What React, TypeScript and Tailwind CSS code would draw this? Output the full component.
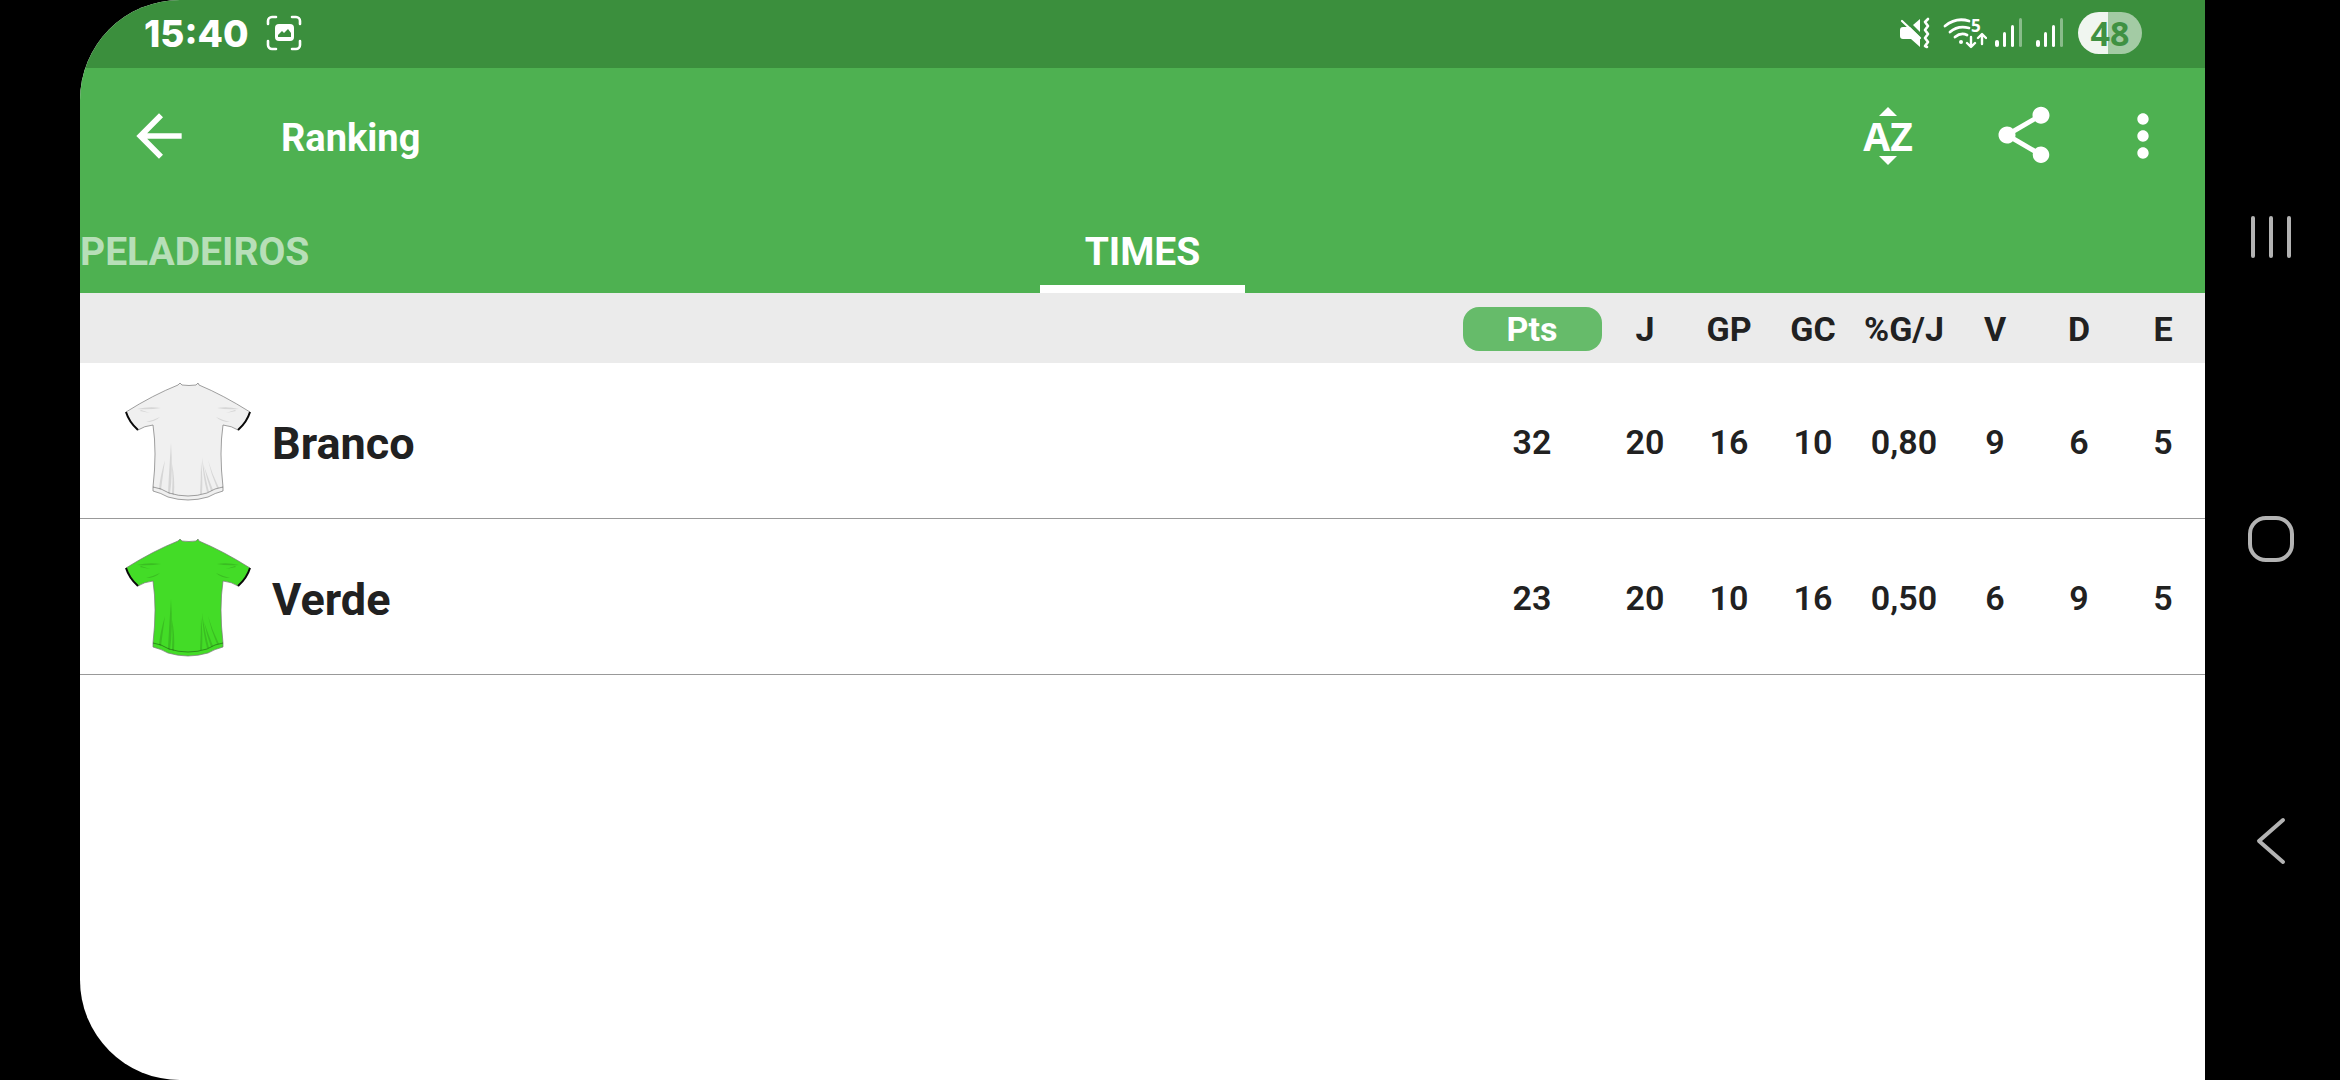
import React from "react";
import { MdArrowBack, MdMoreVert, MdShare } from "react-icons/md";

type Team = { name: string; color: string; shade: string; values: string[] };

const columns = ["Pts", "J", "GP", "GC", "%G/J", "V", "D", "E"];

const teams: Team[] = [
  { name: "Branco", color: "#f0f0f0", shade: "#d6d6d6", values: ["32", "20", "16", "10", "0,80", "9", "6", "5"] },
  { name: "Verde", color: "#43dc27", shade: "#3abd22", values: ["23", "20", "10", "16", "0,50", "6", "9", "5"] },
];

function Shirt({ color, shade }: { color: string; shade: string }) {
  return (
    <svg width="130" height="120" viewBox="0 0 130 120" aria-hidden="true">
      <path
        d="M57 1 L55 3 Q30 13 3 30 Q6 40 15 48 Q21 44 30 43 Q34 70 30 105 L30 109 Q38 111 45 115 Q65 121 85 115 Q92 111 100 109 L100 105 Q96 70 100 43 Q109 44 115 48 Q124 40 127 30 Q100 13 76 3 L75 1 L73 3 Q66 4 59 3 Z"
        fill={color}
        stroke="#777"
        strokeWidth="0.7"
      />
      <g fill={shade}>
        <path d="M14 27 Q26 24 38 26 Q26 28 14 27Z M18 28 L27 31 L17 29Z M23 40 Q31 38 37 35 Q32 40 23 40Z" />
        <path d="M116 27 Q104 24 94 26 Q104 28 116 27Z M112 28 L103 31 L113 29Z M107 40 Q99 38 93 35 Q98 40 107 40Z" />
        <path d="M48 61 Q46 90 45 111 L47 112 Q50 90 48 61Z M49 82 Q50 98 49 112 L51 113 Q52 96 49 82Z M42 78 Q37 95 36 107 L38 108 Q40 92 42 78Z" />
        <path d="M78 80 Q78 95 77 112 L79 112 Q80 95 78 80Z M79 75 Q82 95 86 110 L84 110 Q80 95 79 75Z M81 84 Q86 98 90 108 L88 109 Q84 98 81 84Z M85 78 Q89 92 96 106 L94 106 Q88 92 85 78Z" />
      </g>
      <path d="M30 105 Q38 106 46 111 Q65 117 84 111 Q92 106 100 105" fill="none" stroke="#000" strokeOpacity="0.35" />
      <path d="M3 30 Q6 40 15 48 M127 30 Q124 40 115 48" fill="none" stroke="#0a0a0a" strokeWidth="2" />
    </svg>
  );
}

function CaptureIcon() {
  return (
    <svg width="36" height="36" viewBox="0 0 36 36" fill="none" aria-hidden="true">
      <path
        d="M2 9V6a4 4 0 0 1 4-4h4M26 2h4a4 4 0 0 1 4 4v3M34 26v4a4 4 0 0 1-4 4h-4M10 34H6a4 4 0 0 1-4-4v-4"
        stroke="#fff"
        strokeWidth="2.6"
        strokeLinecap="round"
      />
      <rect x="9" y="9" width="19" height="17" rx="4" fill="#fff" />
      <path d="M12 22v-2l4-4 2 2 4-4 3 4v4z" fill="#3b8f3d" />
    </svg>
  );
}

function MuteIcon() {
  return (
    <svg width="32" height="32" viewBox="0 0 32 32" fill="none" aria-hidden="true">
      <path d="M1 13a3 3 0 0 1 3-3h4l3 0L21 20v10l-9-8H4a3 3 0 0 1-3-3z" fill="#fff" />
      <path d="M14 8l7-6v13z" fill="#fff" />
      <path d="M3 4l18 17" stroke="#fff" strokeWidth="2.2" strokeLinecap="round" />
      <path d="M29 2l-3 3 3 4-3 4 3 4-3 4 3 4-3 4 2 1" stroke="#fff" strokeWidth="2.6" strokeLinecap="round" strokeLinejoin="round" />
    </svg>
  );
}

function WifiIcon() {
  return (
    <svg width="44" height="44" viewBox="0 -6 44 44" fill="none" stroke="#fff" strokeLinecap="round" strokeLinejoin="round" aria-hidden="true">
      <path d="M2 9Q13 0 26 4M7 15Q15 8 26 11M12 20Q18 15 24 18" strokeWidth="2.8" />
      <circle cx="18" cy="25" r="2" fill="#fff" stroke="none" />
      <path d="M28 20v9M24 26l4 4 4-4M39 27v-9M35 21l4-4 4 4" strokeWidth="2.4" />
      <text x="28" y="15" fontFamily="Open Sans" fontWeight="700" fontSize="17" fill="#fff" stroke="none">5</text>
    </svg>
  );
}

function SignalIcon() {
  return (
    <svg width="28" height="30" viewBox="0 0 28 30" fill="#fff" aria-hidden="true">
      <rect x="0" y="22" width="4" height="7" rx="2" />
      <rect x="8" y="14" width="3" height="15" rx="1.5" />
      <rect x="16" y="7" width="3" height="22" rx="1.5" />
      <rect x="24" y="0" width="3" height="29" rx="1.5" opacity="0.4" />
    </svg>
  );
}

function StatusBar() {
  return (
    <div className="flex h-[68px] items-center justify-between bg-[#3b8f3d] pr-[63px] pb-[2px] pl-16 text-white">
      <div className="flex items-center gap-[17px]">
        <span className="font-['Inter'] text-[37px] leading-none font-extrabold">15:40</span>
        <CaptureIcon />
      </div>
      <div className="flex items-center">
        <MuteIcon />
        <div className="ml-3 flex"><WifiIcon /></div>
        <div className="ml-2 flex gap-[13px]">
          <SignalIcon />
          <SignalIcon />
        </div>
        <div className="ml-[14px] flex h-[42px] w-16 items-center justify-center rounded-full bg-linear-to-r from-[#f0f6f0] from-47% to-[#a3cba4] to-47% font-['Open_Sans'] text-[34px] leading-none font-bold text-[#3f9142]">
          48
        </div>
      </div>
    </div>
  );
}

function AppBar() {
  return (
    <header className="bg-[#4eb151] text-white">
      <div className="flex h-[136px] items-center">
        <button aria-label="Voltar" className="ml-[45px] flex"><MdArrowBack size={68} /></button>
        <h1 className="ml-[88px] grow pt-1 font-['Roboto'] text-[38px] leading-none font-bold">Ranking</h1>
        <button aria-label="Ordenar" className="flex w-16 flex-col items-center gap-[6px]">
          <svg width="18" height="9" viewBox="0 0 18 9" fill="#fff" aria-hidden="true"><path d="M9 0l9 9H0z" /></svg>
          <span className="font-['Open_Sans'] text-[39px] leading-7 font-bold">AZ</span>
          <svg width="18" height="9" viewBox="0 0 18 9" fill="#fff" aria-hidden="true"><path d="M0 0h18L9 9z" /></svg>
        </button>
        <button aria-label="Compartilhar" className="ml-[70px] flex pb-[2px]"><MdShare size={68} /></button>
        <button aria-label="Mais opções" className="mr-7 ml-[51px] flex"><MdMoreVert size={68} /></button>
      </div>
      <div role="tablist" className="grid h-[89px] grid-cols-[1fr_205px_1fr] font-['Roboto'] text-[39px] leading-none font-bold">
        <button role="tab" aria-selected="false" className="pt-2 text-left text-white/60">PELADEIROS</button>
        <button role="tab" aria-selected="true" className="border-b-8 border-white pt-4">TIMES</button>
      </div>
    </header>
  );
}

function RankingTable() {
  return (
    <table className="w-full table-fixed border-separate border-spacing-0 font-['Roboto'] text-[34px] leading-none text-[#212121]">
      <colgroup>
        <col />
        <col className="w-[142px]" />
        <col className="w-[84px]" />
        <col className="w-[84px]" />
        <col className="w-[84px]" />
        <col className="w-[98px]" />
        <col className="w-[84px]" />
        <col className="w-[84px]" />
        <col className="w-[84px]" />
      </colgroup>
      <thead>
        <tr className="h-[70px] bg-[#ebebeb]">
          <th aria-label="Time" />
          {columns.map((c, i) => (
            <th key={c} className="p-0 pt-[2px] font-bold">
              {i === 0 ? (
                <button className="h-11 w-[139px] rounded-[16px] bg-[#66bb6a] font-bold text-white">{c}</button>
              ) : (
                c
              )}
            </th>
          ))}
        </tr>
      </thead>
      <tbody>
        {teams.map((t) => (
          <tr key={t.name} className="h-[156px]">
            <th scope="row" className="border-b border-[#999] p-0 text-left text-[45px] font-bold">
              <div className="flex items-center gap-[19px] pt-[2px] pl-[43px]">
                <Shirt color={t.color} shade={t.shade} />
                <span className="pt-1">{t.name}</span>
              </div>
            </th>
            {t.values.map((v, i) => (
              <td key={i} className="border-b border-[#999] p-0 pt-[2px] text-center font-semibold">{v}</td>
            ))}
          </tr>
        ))}
      </tbody>
    </table>
  );
}

function SystemNav() {
  return (
    <nav aria-label="Sistema" className="flex w-[135px] shrink-0 flex-col items-center justify-center pr-[3px] pb-[3px]">
      <button aria-label="Recentes" className="flex h-[302px] items-center">
        <svg width="48" height="48" viewBox="0 0 48 48" stroke="#b3b3b3" strokeWidth="4" strokeLinecap="round" aria-hidden="true">
          <path d="M6 5v38M24 5v38M42 5v38" />
        </svg>
      </button>
      <button aria-label="Início" className="flex h-[302px] items-center">
        <svg width="48" height="48" viewBox="0 0 48 48" fill="none" stroke="#b3b3b3" strokeWidth="4" aria-hidden="true">
          <rect x="3" y="3" width="42" height="42" rx="16" />
        </svg>
      </button>
      <button aria-label="Voltar ao anterior" className="flex h-[302px] items-center">
        <svg width="48" height="48" viewBox="0 0 48 48" fill="none" stroke="#b3b3b3" strokeWidth="4" strokeLinecap="round" strokeLinejoin="round" aria-hidden="true">
          <path d="M36 3L12 24l24 21" />
        </svg>
      </button>
    </nav>
  );
}

export default function App() {
  return (
    <div className="flex min-h-screen bg-black pl-20">
      <main className="min-w-0 flex-1 overflow-hidden rounded-l-[100px] bg-white">
        <StatusBar />
        <AppBar />
        <RankingTable />
      </main>
      <SystemNav />
    </div>
  );
}
